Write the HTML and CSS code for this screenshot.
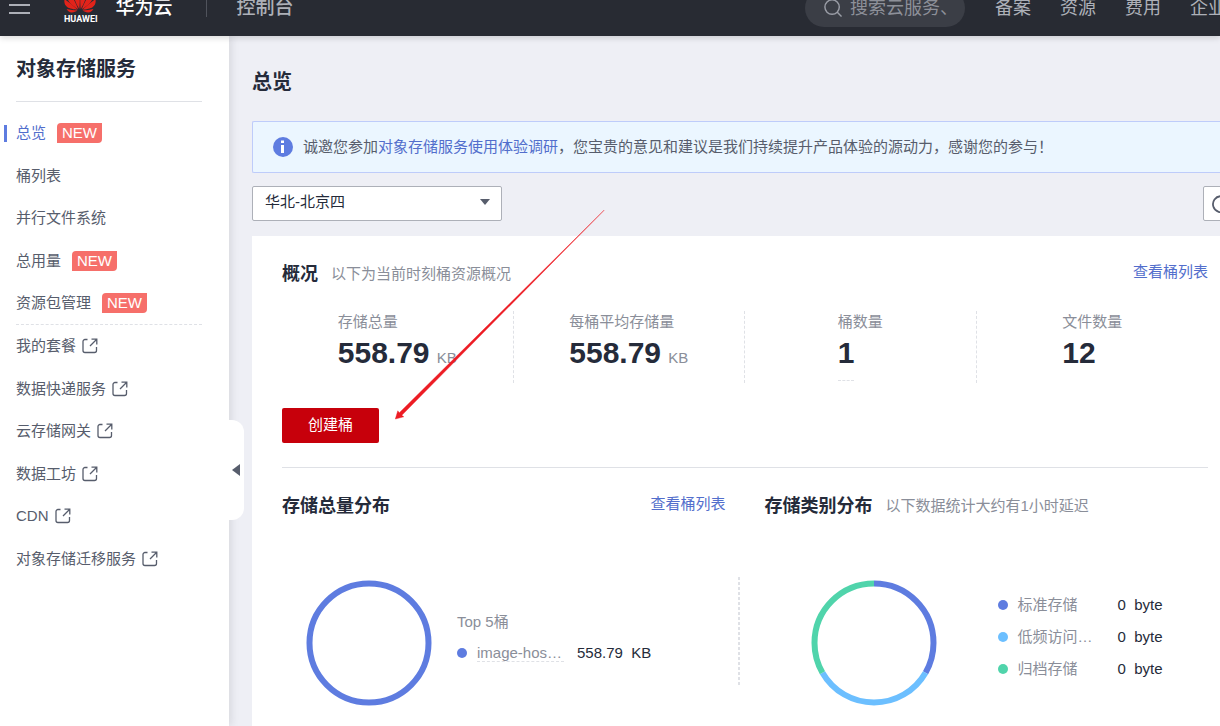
FILE: index.html
```html
<!DOCTYPE html>
<html lang="zh-CN">
<head>
<meta charset="utf-8">
<title>对象存储服务</title>
<link rel="stylesheet" href="styles.css">
</head>
<body>
<svg class="defs" width="0" height="0" aria-hidden="true">
  <symbol id="ext" viewBox="0 0 16 16">
    <path d="M5.500 1.500H3a2 2 0 0 0-2 2V12.500a2 2 0 0 0 2 2H12.500a2 2 0 0 0 2-2V9M9.500 1.200H14.800V6.500M14.500 1.500L8 8" fill="none" stroke="currentColor" stroke-width="1.300"/>
  </symbol>
</svg>
<header class="topbar">
  <button class="menu" aria-label="菜单"><i></i><i></i><i></i></button>
  <a class="brand" href="#">
    <span class="logo">
      <svg viewBox="0 0 32 24" width="32" height="24" aria-hidden="true">
        <g fill="#e2231a">
          <path d="M15.300 22C11.500 16 8.500 9 10.500 4 12 1.500 14 1 14.800 1 16 6 16 16 15.300 22Z"/>
          <path d="M16.700 22C20.500 16 23.500 9 21.500 4 20 1.500 18 1 17.200 1 16 6 16 16 16.700 22Z"/>
          <path d="M14.400 22.300C12 17 8.500 9 5.500 5.500 3 8 2.800 10.500 4 13 6 17 11 20.500 14.400 22.300Z"/>
          <path d="M17.600 22.300C20 17 23.500 9 26.500 5.500 29 8 29.200 10.500 28 13 26 17 21 20.500 17.600 22.300Z"/>
          <path d="M13.700 22.800C9 18.500 4 14.500.600 12.200-.300 15.500 1 18.500 3.500 20.300 5 21.500 10 22.500 13.700 22.800Z"/>
          <path d="M18.300 22.800C23 18.500 28 14.500 31.400 12.200 32.300 15.500 31 18.500 28.500 20.300 27 21.500 22 22.500 18.300 22.800Z"/>
          <path d="M13.500 23.500C10 23.200 6 22.800 2.600 22 4 24.500 6 25.800 8 25.500 10 25.200 12 24.500 13.500 23.500Z"/>
          <path d="M18.500 23.500C22 23.200 26 22.800 29.400 22 28 24.500 26 25.800 24 25.500 22 25.200 20 24.500 18.500 23.500Z"/>
        </g>
      </svg>
      <span class="logo-word">HUAWEI</span>
    </span>
    <span class="brand-name">华为云</span>
  </a>
  <span class="bar"></span>
  <a class="console" href="#">控制台</a>
  <label class="search">
    <svg viewBox="0 0 20 20" width="18" height="18" aria-hidden="true"><g fill="none" stroke="#9a9da6" stroke-width="1.600"><circle cx="9" cy="9" r="8"/><path d="M14.500 14.500L19.500 19.500"/></g></svg>
    <input type="text" placeholder="搜索云服务、" aria-label="搜索">
  </label>
  <nav class="topnav"><a href="#">备案</a><a href="#">资源</a><a href="#">费用</a><a href="#">企业</a></nav>
</header>
<div class="shell">
  <aside class="sidebar">
    <h2>对象存储服务</h2>
    <ul>
      <li class="on"><a href="#">总览</a><span class="new">NEW</span></li>
      <li><a href="#">桶列表</a></li>
      <li><a href="#">并行文件系统</a></li>
      <li><a href="#">总用量</a><span class="new">NEW</span></li>
      <li class="sep"><a href="#">资源包管理</a><span class="new">NEW</span></li>
      <li><a href="#">我的套餐<svg class="ext"><use href="#ext"/></svg></a></li>
      <li><a href="#">数据快递服务<svg class="ext"><use href="#ext"/></svg></a></li>
      <li><a href="#">云存储网关<svg class="ext"><use href="#ext"/></svg></a></li>
      <li><a href="#">数据工坊<svg class="ext"><use href="#ext"/></svg></a></li>
      <li><a href="#">CDN<svg class="ext"><use href="#ext"/></svg></a></li>
      <li><a href="#">对象存储迁移服务<svg class="ext"><use href="#ext"/></svg></a></li>
    </ul>
    <button class="fold" aria-label="收起"><svg viewBox="0 0 8 12" width="8" height="12"><path d="M8 0V12L0 6Z" fill="#575d6c"/></svg></button>
  </aside>
  <main class="main">
    <h1>总览</h1>
    <div class="notice">
      <svg viewBox="0 0 20 20" width="20" height="20" aria-hidden="true"><circle cx="10" cy="10" r="10" fill="#5e7ce0"/><path d="M8 3.500h3v2.500h-3zM8 8h3v8h-3z" fill="#fff"/></svg>
      <p>诚邀您参加<a href="#">对象存储服务使用体验调研</a>，您宝贵的意见和建议是我们持续提升产品体验的源动力，感谢您的参与！</p>
    </div>
    <div class="tools">
      <div class="region">
        <select aria-label="区域"><option>华北-北京四</option></select>
        <svg viewBox="0 0 10 6" width="10" height="6" aria-hidden="true"><path d="M0 0H10L5 6Z" fill="#575d6c"/></svg>
      </div>
      <button class="refresh" aria-label="刷新"><svg viewBox="0 0 18 18" width="18" height="18"><path d="M15.500 4.500A8 8 0 1 0 17 9M16 1v4h-4" fill="none" stroke="#575d6c" stroke-width="1.800"/></svg></button>
    </div>
    <section class="panel">
      <div class="head">
        <h3>概况</h3><span class="hint">以下为当前时刻桶资源概况</span><a class="more" href="#">查看桶列表</a>
      </div>
      <div class="stats">
        <div class="stat"><div><span class="name">存储总量</span><span class="num"><b>558.79</b> KB</span></div></div>
        <div class="stat"><div><span class="name">每桶平均存储量</span><span class="num"><b>558.79</b> KB</span></div></div>
        <div class="stat"><div><span class="name">桶数量</span><a class="num link" href="#"><b>1</b></a></div></div>
        <div class="stat"><div><span class="name">文件数量</span><span class="num"><b>12</b></span></div></div>
      </div>
      <button class="create">创建桶</button>
      <div class="charts">
        <div class="chart">
          <div class="head"><h3>存储总量分布</h3><a class="more" href="#">查看桶列表</a></div>
          <div class="body left">
            <svg class="ring" viewBox="0 0 126 126" width="126" height="126"><circle cx="63" cy="63" r="59.500" fill="none" stroke="#5e7ce0" stroke-width="6"/></svg>
            <div class="legend">
              <div class="top">Top 5桶</div>
              <div class="row"><i class="dot blue"></i><a class="bucket" href="#">image-hos…</a><span class="val">558.79&nbsp; KB</span></div>
            </div>
          </div>
        </div>
        <div class="rule"></div>
        <div class="chart">
          <div class="head"><h3>存储类别分布</h3><span class="hint">以下数据统计大约有1小时延迟</span></div>
          <div class="body right">
            <svg class="ring" viewBox="0 0 126 126" width="126" height="126">
              <g fill="none" stroke-width="6" transform="rotate(-90 63 63)">
                <circle cx="63" cy="63" r="59.500" stroke="#5e7ce0" pathLength="300" stroke-dasharray="100 200"/>
                <circle cx="63" cy="63" r="59.500" stroke="#6cbfff" pathLength="300" stroke-dasharray="100 200" stroke-dashoffset="-100"/>
                <circle cx="63" cy="63" r="59.500" stroke="#50d4ab" pathLength="300" stroke-dasharray="100 200" stroke-dashoffset="-200"/>
              </g>
            </svg>
            <div class="legend">
              <div class="row"><i class="dot blue"></i><span class="kind">标准存储</span><span class="val">0&nbsp; byte</span></div>
              <div class="row"><i class="dot sky"></i><span class="kind">低频访问…</span><span class="val">0&nbsp; byte</span></div>
              <div class="row"><i class="dot green"></i><span class="kind">归档存储</span><span class="val">0&nbsp; byte</span></div>
            </div>
          </div>
        </div>
      </div>
    </section>
    <svg class="pointer" viewBox="0 0 210 210" width="210" height="210" aria-hidden="true"><path d="M209.300 0L6.800 205.300 8.800 206.800 .300 209 2.800 200.800 4.300 202.800Z" fill="#ed1c24" stroke="#ed1c24" stroke-width=".4"/></svg>
  </main>
</div>
</body>
</html>
```
FILE: styles.css
```css
* { box-sizing: border-box; }
body {
  margin: 0;
  overflow: hidden;
  background: #eeeff5;
  color: #252b3a;
  font: 15px/20px "Liberation Sans", "Noto Sans CJK SC", sans-serif;
}
a { color: inherit; text-decoration: none; }
h1, h2, h3, p, ul { margin: 0; padding: 0; }
button, select, input { font: inherit; color: inherit; }
button { padding: 0; border: 0; background: none; cursor: pointer; }
svg { display: block; flex: none; }
.defs { position: absolute; }

.topbar {
  position: relative;
  z-index: 3;
  display: flex;
  align-items: center;
  height: 58px;
  margin-top: -22px;
  padding: 2px 0 0 9px;
  overflow: hidden;
  background: #282b33;
  color: #adb0b8;
  white-space: nowrap;
  box-shadow: 0 2px 6px rgba(0, 0, 0, .15);
}
.menu { display: grid; gap: 6px; width: 21px; margin-bottom: 6px; }
.menu i { height: 2px; background: #adb0b8; }
.brand { display: flex; align-items: center; margin-left: 34px; color: #fff; }
.logo { display: grid; grid-template-rows: 27px 10px; height: 40px; margin-bottom: 2px; }
.logo svg { overflow: visible; }
.logo-word { font: bold 9px/10px Roboto, sans-serif; }
.brand-name { margin-left: 18px; font-size: 19px; line-height: 28px; font-weight: 500; }
.bar { width: 1px; height: 18px; margin-left: 33px; background: #50535c; }
.console { margin-left: 30px; font-size: 19px; font-weight: 500; }
.search {
  display: flex;
  align-items: center;
  gap: 8px;
  width: 160px;
  height: 38px;
  margin-left: auto;
  padding: 0 18px 0 19px;
  border-radius: 19px;
  background: #3b3e46;
}
.search input { flex: 1; min-width: 0; padding: 0; border: 0; outline: 0; background: none; font-size: 18px; }
.search input::placeholder { color: #8d9099; opacity: 1; }
.topnav { display: flex; gap: 29px; margin: 0 -6px 0 30px; font-size: 18px; }

.shell { display: flex; min-height: 690px; }
.sidebar {
  position: relative;
  z-index: 2;
  flex: none;
  width: 229px;
  padding: 23px 27px 0 16px;
  background: #fff;
  color: #575d6c;
  box-shadow: 2px 0 8px rgba(40, 43, 51, .12);
}
.sidebar h2 { padding-bottom: 22px; border-bottom: 1px solid #dfe1e6; color: #252b3a; font-size: 20px; line-height: 20px; }
.sidebar ul { display: flex; flex-direction: column; height: 468px; margin-top: 10px; list-style: none; }
.sidebar li { display: flex; flex: 1; align-items: center; gap: 11px; }
.sidebar li a { display: flex; align-items: center; gap: 6px; }
.sidebar .on { margin-left: -12px; color: #526ecc; }
.sidebar .on::before { content: ""; width: 3px; height: 17px; margin-right: -2px; background: #5e7ce0; }
.sidebar .sep { border-bottom: 1px dashed #dfe1e6; }
.new { padding: 0 5px; border-radius: 4px 0; background: #f66f6a; color: #fff; }
.ext { width: 16px; height: 16px; }
.fold {
  position: absolute;
  top: 384px;
  left: 229px;
  display: flex;
  align-items: center;
  width: 15px;
  height: 100px;
  padding-left: 3px;
  border-radius: 0 12px 12px 0;
  background: #fff;
}

.main { position: relative; display: flex; flex-direction: column; flex: 1; min-width: 0; padding: 36px 0 0 23px; overflow: hidden; }
.main h1 { font-size: 20px; line-height: 20px; }
.notice {
  display: flex;
  align-items: center;
  gap: 10px;
  height: 52px;
  margin-top: 29px;
  padding: 0 20px;
  border: 1px solid #beccfa;
  border-right: 0;
  border-radius: 2px 0 0 2px;
  background: #ebf6ff;
  color: #575d6c;
  white-space: nowrap;
}
.notice a, .more { color: #526ecc; }
.tools { display: flex; justify-content: space-between; margin: 13px -18px 0 0; }
.region { position: relative; width: 250px; }
.region select {
  width: 100%;
  height: 35px;
  padding: 0 12px 3px;
  border: 1px solid #adb0b8;
  border-radius: 2px;
  background: #fff;
  appearance: none;
}
.region svg { position: absolute; top: 13px; right: 12px; pointer-events: none; }
.refresh { display: flex; align-items: center; justify-content: center; width: 35px; height: 35px; border: 1px solid #adb0b8; border-radius: 2px; background: #fff; }

.panel { flex: 1; margin-top: 15px; padding: 28px 12px 0 30px; background: #fff; }
.head { display: flex; align-items: center; gap: 13px; height: 20px; }
.head h3 { font-size: 18px; line-height: 20px; white-space: nowrap; }
.hint { color: #8a8e99; }
.more { margin-left: auto; padding-bottom: 4px; }
.stats { display: grid; grid-template-columns: repeat(4, 1fr); margin-top: 27px; }
.stat { display: flex; justify-content: center; height: 72px; border-right: 1px dashed #dfe1e6; color: #8a8e99; }
.stat:last-child { border-right: 0; }
.name { display: block; line-height: 22px; }
.num { display: inline-block; line-height: 40px; }
.num b { margin-right: 3px; color: #252b3a; font-size: 30px; }
.num.link { height: 48px; border-bottom: 1px dashed #dfe1e6; }
.num.link b { margin-right: 0; }
.create { width: 97px; height: 35px; margin-top: 25px; padding-bottom: 2px; border-radius: 2px; background: #c7000b; color: #fff; }
.charts { display: grid; grid-template-columns: 1fr 39px 1fr; margin-top: 24px; padding-top: 28px; border-top: 1px solid #dfe1e6; }
.rule { width: 2px; height: 108px; margin: 81px 0 0 12px; background: repeating-linear-gradient(#dfe1e6 0 3px, transparent 3px 5px); }
.body { display: flex; align-items: center; height: 126px; margin-top: 64px; }
.left { padding-left: 24px; }
.right { padding-left: 46px; }
.left .legend { margin-left: 25px; padding-bottom: 8px; }
.right .legend { margin-left: 61px; padding-bottom: 12px; }
.top { margin-bottom: 8px; color: #8a8e99; }
.row { display: flex; align-items: center; height: 32px; white-space: nowrap; }
.left .row { height: 26px; }
.dot { width: 10px; height: 10px; margin-right: 10px; border-radius: 50%; }
.blue { background: #5e7ce0; }
.sky { background: #6cbfff; }
.green { background: #50d4ab; }
.bucket { width: 87px; margin-right: 13px; border-bottom: 1px dashed #dfe1e6; color: #8a8e99; line-height: 16px; }
.kind { width: 100px; color: #8a8e99; }
.pointer { position: absolute; top: 174px; left: 166px; pointer-events: none; }
```
